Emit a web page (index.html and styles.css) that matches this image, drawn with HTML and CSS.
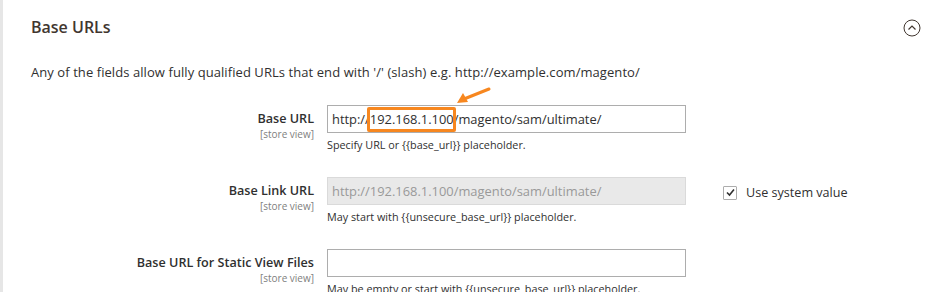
FILE: index.html
```html
<!DOCTYPE html>
<html lang="en">
<head>
    <meta charset="UTF-8">
    <meta name="viewport" content="width=device-width, initial-scale=1.0">
    <title>Base URLs</title>
    <link rel="stylesheet" href="styles.css">
</head>
<body>
    <div class="config-section">
        <div class="section-header">
            <span class="section-title">Base URLs</span>
            <span class="collapse-icon">
                <svg width="18" height="18" viewBox="0 0 18 18">
                    <circle cx="9" cy="9" r="8" fill="none" stroke="#41362f" stroke-width="1"/>
                    <path d="M5.5 10.5 L9 7 L12.5 10.5" fill="none" stroke="#41362f" stroke-width="1.2"/>
                </svg>
            </span>
        </div>

        <p class="section-comment">Any of the fields allow fully qualified URLs that end with '/' (slash) e.g. http://example.com/magento/</p>

        <div class="field-row">
            <div class="field-label">
                <span class="label-text">Base URL</span>
                <span class="scope">[store view]</span>
            </div>
            <div class="field-control">
                <div class="input-wrap">
                    <input type="text" class="text-input" value="http://192.168.1.100/magento/sam/ultimate/">
                    <span class="highlight-box"></span>
                    <svg class="highlight-arrow" width="40" height="20" viewBox="0 0 40 20">
                        <path d="M35 3 L10 13" stroke="#f7871f" stroke-width="3" stroke-linecap="round" fill="none"/>
                        <path d="M3 17 L9 7 L14 16 Z" fill="#f7871f"/>
                    </svg>
                </div>
                <div class="note">Specify URL or {{base_url}} placeholder.</div>
            </div>
            <div class="field-extra"></div>
        </div>

        <div class="field-row">
            <div class="field-label">
                <span class="label-text">Base Link URL</span>
                <span class="scope">[store view]</span>
            </div>
            <div class="field-control">
                <div class="input-wrap">
                    <input type="text" class="text-input" value="http://192.168.1.100/magento/sam/ultimate/" disabled>
                </div>
                <div class="note">May start with {{unsecure_base_url}} placeholder.</div>
            </div>
            <div class="field-extra">
                <label class="system-value">
                    <span class="checkbox">
                        <svg width="11" height="11" viewBox="0 0 11 11">
                            <path d="M2 5.5 L4.5 8 L9 2.5" fill="none" stroke="#303030" stroke-width="1.6"/>
                        </svg>
                    </span>
                    Use system value
                </label>
            </div>
        </div>

        <div class="field-row">
            <div class="field-label">
                <span class="label-text">Base URL for Static View Files</span>
                <span class="scope">[store view]</span>
            </div>
            <div class="field-control">
                <div class="input-wrap">
                    <input type="text" class="text-input" value="">
                </div>
                <div class="note">May be empty or start with {{unsecure_base_url}} placeholder.</div>
            </div>
            <div class="field-extra"></div>
        </div>
    </div>
</body>
</html>
```

FILE: styles.css
```css
* {
    box-sizing: border-box;
    margin: 0;
    padding: 0;
    font-family: 'Open Sans', 'Liberation Sans', sans-serif;
}

body {
    background-color: white;
    color: #303030;
    width: 952px;
    height: 292px;
    overflow: hidden;
}

.config-section {
    border-left: 3px solid #e6e6e6;
    height: 292px;
}

.section-header {
    display: flex;
    justify-content: space-between;
    align-items: center;
    padding: 13px 31px 0 28px;
    height: 40px;
}

.section-title {
    font-size: 16px;
    font-weight: 600;
    line-height: 24px;
    color: #41362f;
}

.collapse-icon {
    display: flex;
    margin-top: 3px;
}

.section-comment {
    font-size: 13px;
    line-height: 20px;
    letter-spacing: 0.07px;
    padding-left: 28px;
    margin-top: 22px;
    height: 43px;
    color: #303030;
}

.field-row {
    display: grid;
    grid-template-columns: 311px 359px 260px;
    column-gap: 13px;
    height: 72px;
}

.field-label {
    display: flex;
    flex-direction: column;
    align-items: flex-end;
    padding-top: 5px;
}

.label-text {
    font-size: 12.6px;
    font-weight: 600;
    line-height: 18px;
    color: #303030;
}

.scope {
    font-size: 10px;
    line-height: 12px;
    color: #808080;
}

.input-wrap {
    position: relative;
}

.text-input {
    display: block;
    width: 359px;
    height: 28px;
    border: 1px solid #adadad;
    padding: 0 4px;
    font-size: 12.9px;
    color: #303030;
    background-color: white;
    outline: none;
}

.text-input:disabled {
    background-color: #e9e9e9;
    color: #999999;
    border-color: #dadada;
}

.highlight-box {
    position: absolute;
    left: 40px;
    top: 2px;
    width: 89px;
    height: 25px;
    border: 3px solid #f7871f;
    border-radius: 2px;
}

.highlight-arrow {
    position: absolute;
    left: 127px;
    top: -19px;
}

.note {
    font-size: 10.8px;
    line-height: 16px;
    margin-top: 4px;
    color: #303030;
}

.field-extra {
    padding: 7px 0 0 24px;
}

.system-value {
    display: flex;
    align-items: center;
    gap: 9px;
    font-size: 12.6px;
    color: #303030;
}

.checkbox {
    display: flex;
    align-items: center;
    justify-content: center;
    width: 14px;
    height: 14px;
    border: 1px solid #adadad;
    border-radius: 1px;
    background-color: white;
}
```
